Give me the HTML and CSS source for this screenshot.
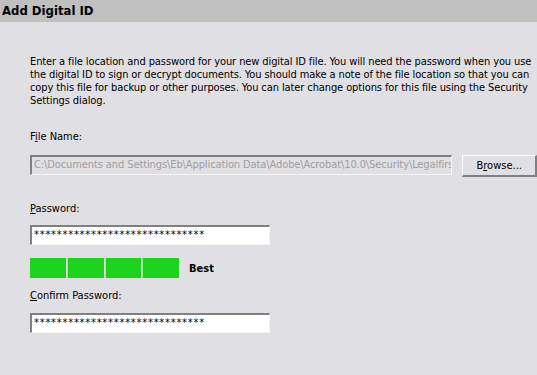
FILE: index.html
```html
<!DOCTYPE html>
<html lang="en">
<head>
    <meta charset="UTF-8">
    <meta name="viewport" content="width=device-width, initial-scale=1.0">
    <title>Add Digital ID</title>
    <link rel="stylesheet" href="styles.css">
</head>
<body>
    <div class="dialog">
        <div class="title-bar">Add Digital ID</div>

        <div class="content">
            <p class="intro">Enter a file location and password for your new digital ID file. You will need the password when you use the digital ID to sign or decrypt documents. You should make a note of the file location so that you can copy this file for backup or other purposes. You can later change options for this file using the Security Settings dialog.</p>

            <div class="label">F<u>i</u>le Name:</div>
            <div class="file-row">
                <div class="field field-file disabled">C:\Documents and Settings\Eb\Application Data\Adobe\Acrobat\10.0\Security\Legalfirst</div>
                <button class="btn">B<u>r</u>owse...</button>
            </div>

            <div class="label label-pw"><u>P</u>assword:</div>
            <div class="field field-pw">******************************</div>

            <div class="strength">
                <div class="meter">
                    <span class="seg"></span>
                    <span class="seg"></span>
                    <span class="seg"></span>
                    <span class="seg"></span>
                </div>
                <span class="strength-label">Best</span>
            </div>

            <div class="label label-confirm"><u>C</u>onfirm Password:</div>
            <div class="field field-pw field-confirm">******************************</div>
        </div>
    </div>
</body>
</html>
```

FILE: styles.css
```css
body {
    margin: 0;
    font-family: "DejaVu Sans Condensed", "DejaVu Sans", sans-serif;
    font-size: 11px;
    color: #000;
    background: #e0dfe3;
}

.dialog {
    width: 537px;
    height: 375px;
    overflow: hidden;
    background: #e0dfe3;
}

.title-bar {
    height: 22px;
    line-height: 22px;
    padding-left: 2px;
    background: #c0c0c0;
    font-weight: bold;
    font-size: 13px;
}

.content {
    padding: 33px 0 0 30px;
}

.intro {
    margin: 0;
    line-height: 13px;
    width: 505px;
    letter-spacing: -0.1px;
}

.label {
    margin-top: 23px;
    height: 14px;
    line-height: 14px;
}

.label-pw {
    margin-top: 25px;
}

.label-confirm {
    margin-top: 11px;
}

.file-row {
    display: flex;
    align-items: flex-start;
    margin-top: 11px;
}

.field {
    box-sizing: border-box;
    height: 20px;
    line-height: 16px;
    padding-left: 2px;
    white-space: nowrap;
    overflow: hidden;
    border-top: 2px solid #808080;
    border-left: 2px solid #808080;
    border-right: 1px solid #f5f5f5;
    border-bottom: 1px solid #f5f5f5;
    background: #fff;
}

.field-file {
    width: 425px;
    letter-spacing: -0.1px;
}

.field.disabled {
    background: #e0dfe3;
    color: #a0a0a0;
}

.field-pw {
    width: 240px;
    margin-top: 9px;
    font-size: 11px;
    letter-spacing: 0.75px;
}

.field-confirm {
    margin-top: 10px;
}

.btn {
    box-sizing: border-box;
    margin-left: 10px;
    width: 75px;
    height: 22px;
    padding: 0;
    font: inherit;
    color: #000;
    background: #e0dfe3;
    border-top: 1px solid #fff;
    border-left: 1px solid #fff;
    border-right: 2px solid #808080;
    border-bottom: 2px solid #808080;
}

.strength {
    display: flex;
    align-items: center;
    margin-top: 13px;
}

.meter {
    display: flex;
    gap: 1px;
    width: 149px;
    height: 20px;
}

.seg {
    flex: 1;
    background: #1bd41b;
}

.seg + .seg {
    border-left: 1px solid #9fe69f;
}

.strength-label {
    margin-left: 10px;
    font-weight: bold;
}
```
